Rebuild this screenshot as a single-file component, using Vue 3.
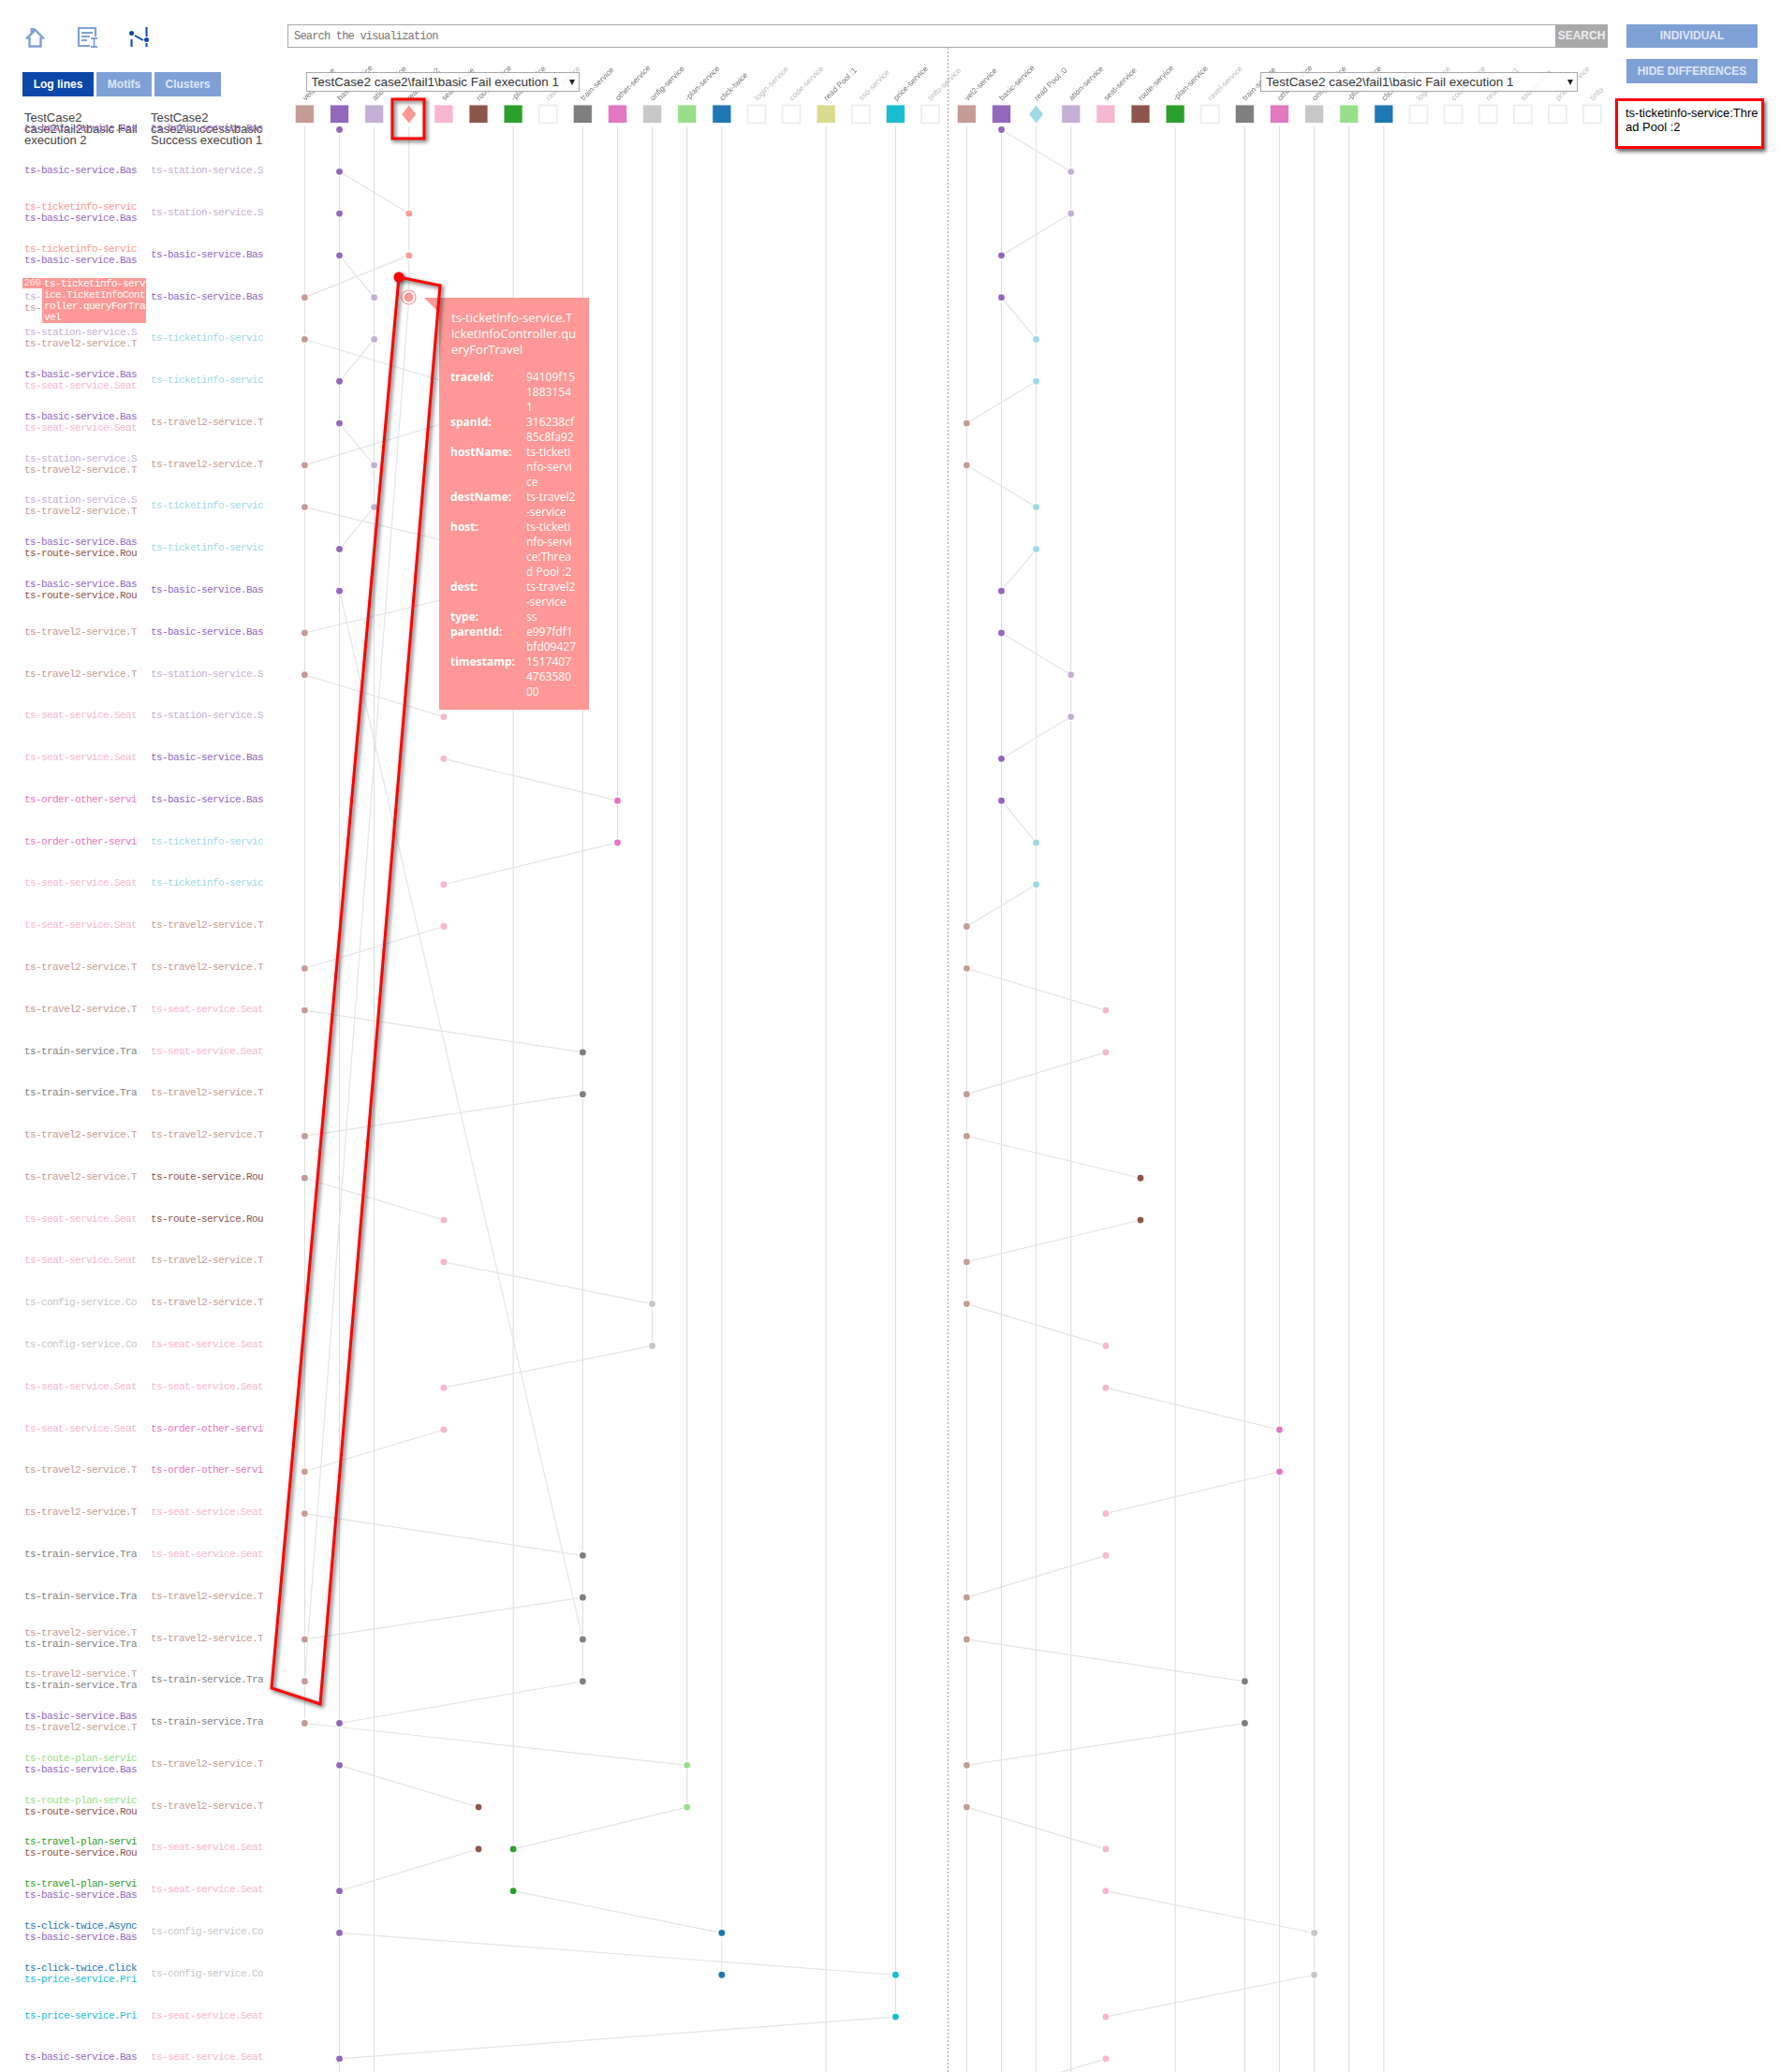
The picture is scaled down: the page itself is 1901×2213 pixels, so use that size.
<template>
	<div class="page">
		<aside class="side">
			<div class="icons">
				<svg class="icon" width="24" height="24" viewBox="0 0 24 24">
					<path d="M7 10V2.500h3.500v4" fill="#7fa0d6" stroke="#7fa0d6" />
					<path d="M2 13.500 11.500 4 21 13.500" fill="none" stroke="#7fa0d6" stroke-width="2.400" />
					<path d="M5.500 11.500V21.500h12v-10" fill="none" stroke="#7fa0d6" stroke-width="2.400" />
				</svg>
				<svg class="icon" width="24" height="24" viewBox="0 0 24 24">
					<path d="M14 21H2V2h18v9" fill="none" stroke="#7fa0d6" stroke-width="2.200" />
					<path d="M5 7h12M5 11h9M5 15h6" stroke="#7fa0d6" stroke-width="1.800" />
					<path d="M15 13h7M15 22h7M18.500 13v9" fill="none" stroke="#7fa0d6" stroke-width="1.800" />
				</svg>
				<svg class="icon" width="24" height="24" viewBox="0 0 24 24">
					<circle cx="3.500" cy="7.500" r="2.500" fill="#0a47a9" />
					<circle cx="19.500" cy="14.500" r="2.500" fill="#0a47a9" />
					<path d="M3.500 14v8M19.500 1v10M19.500 18v4" stroke="#0a47a9" stroke-width="2" />
					<path d="M7 10l9 5" stroke="#0a47a9" stroke-width="2" />
				</svg>
			</div>

			<div class="tabs">
				<div class="tab tab-active">Log lines</div>
				<div class="tab tab-motifs">Motifs</div>
				<div class="tab tab-clusters">Clusters</div>
			</div>

			<div class="log-head">
				<div>TestCase2<br />case2\fail2\basic Fail<br />execution 2</div>
				<div>TestCase2<br />case2\success\basic<br />Success execution 1</div>
			</div>

			<div class="log-rows">
				<div v-for="(row, index) in logRows" :key="index" class="log-row">
					<div class="log-cell">
						<div
							v-for="(name, i) in row.left"
							:key="i"
							class="log-line"
							:style="{ color: services[name].color }"
						>
							{{ services[name].text }}
						</div>
						<template v-if="index === 4">
							<div class="hover-num">269</div>
							<div class="hover-text">ts-ticketinfo-service.TicketInfoController.queryForTravel</div>
						</template>
					</div>
					<div class="log-cell">
						<div class="log-line" :style="{ color: services[row.right].color }">
							{{ services[row.right].text }}
						</div>
					</div>
				</div>
			</div>
		</aside>

		<main class="main">
			<div class="search">
				<input class="search-input" type="text" placeholder="Search the visualization" />
				<div class="search-button">SEARCH</div>
			</div>

			<div class="chart">
				<svg class="chart-svg" width="1412" height="2162" viewBox="300 51 1412 2162">
					<line x1="1012.600" y1="51" x2="1012.600" y2="2213" stroke="#b5b5b5" stroke-width="1.500" stroke-dasharray="2 2" />

					<g v-for="lane in lanes" :key="lane.name">
						<line
							v-for="col in lane.verticals"
							:key="col.index"
							:x1="lane.x(col.index)"
							y1="135"
							:x2="lane.x(col.index)"
							:y2="col.end"
							stroke="#dcdcdc"
							stroke-width="1"
						/>
						<line
							v-for="(link, i) in lane.links"
							:key="i"
							:x1="lane.x(link[1])"
							:y1="rowY(link[0])"
							:x2="lane.x(link[3])"
							:y2="rowY(link[2])"
							stroke="#e4e4e4"
							stroke-width="1.200"
						/>

						<g v-for="(item, i) in lane.columns" :key="i">
							<text
								class="col-label"
								:class="{ 'col-label-off': !item.color }"
								:x="lane.x(i) + 1"
								y="108"
								:transform="`rotate(-45 ${lane.x(i) + 1} 108)`"
							>
								{{ item.label }}
							</text>
							<polygon
								v-if="item.diamond"
								:points="diamondPoints(lane.x(i))"
								:fill="item.color"
							/>
							<rect
								v-else-if="item.color"
								:x="lane.x(i) - 9.5"
								y="112.500"
								width="19"
								height="18.500"
								:fill="item.color"
								:stroke="item.color"
								stroke-opacity="0.200"
								stroke-width="1.500"
							/>
							<rect
								v-else
								:x="lane.x(i) - 9.5"
								y="112.500"
								width="19"
								height="19"
								fill="#fff"
								stroke="#eeeeee"
								stroke-width="2"
							/>
						</g>

						<circle
							v-for="(dot, i) in lane.dots"
							:key="i"
							class="dot"
							:cx="lane.x(dot[1])"
							:cy="rowY(dot[0])"
							r="3.400"
							:fill="lane.columns[dot[1]].color"
						/>
					</g>

					<circle cx="436.500" cy="317.500" r="7.500" fill="#fff" stroke="#ff9896" stroke-width="1.200" />
					<circle cx="436.500" cy="317.500" r="5" fill="#ff9896" />
				</svg>

				<div class="picker picker-left">
					<select class="picker-select">
						<option>TestCase2 case2\fail1\basic Fail execution 1</option>
					</select>
				</div>
				<div class="picker picker-right">
					<select class="picker-select">
						<option>TestCase2 case2\fail1\basic Fail execution 1</option>
					</select>
				</div>

				<div class="tip">
					<div class="tip-title">
						<div v-for="line in tipTitle" :key="line">{{ line }}</div>
					</div>
					<div v-for="entry in tipRows" :key="entry.label" class="tip-row">
						<div class="tip-label">{{ entry.label }}</div>
						<div>
							<div v-for="line in entry.lines" :key="line">{{ line }}</div>
						</div>
					</div>
				</div>

				<svg class="marks" width="1412" height="2162" viewBox="300 51 1412 2162">
					<rect x="419" y="106" width="34" height="42" fill="none" stroke="#f00" stroke-width="3" />
					<polygon points="426,296 470,305 342,1820 290,1803" fill="none" stroke="#f00" stroke-width="3" />
					<circle cx="426" cy="296" r="5.500" fill="#f00" />
				</svg>
			</div>
		</main>

		<section class="controls">
			<div class="control-button">INDIVIDUAL</div>
			<div class="control-button control-second">HIDE DIFFERENCES</div>
			<div class="selected-box">ts-ticketinfo-service:Thread Pool :2</div>
		</section>
	</div>
</template>

<script setup>
const services = {
	basic: { text: "ts-basic-service.BasicController", color: "#9467bd" },
	station: { text: "ts-station-service.StationController", color: "#c5b0d5" },
	ticket: { text: "ts-ticketinfo-service.TicketInfoController", color: "#ff9896" },
	ticketB: { text: "ts-ticketinfo-service.TicketInfoController", color: "#9edae5" },
	travel2: { text: "ts-travel2-service.Travel2Controller", color: "#c49c94" },
	seat: { text: "ts-seat-service.SeatController", color: "#f7b6d2" },
	route: { text: "ts-route-service.RouteController", color: "#8c564b" },
	order: { text: "ts-order-other-service.OrderOtherController", color: "#e377c2" },
	train: { text: "ts-train-service.TrainController", color: "#7f7f7f" },
	config: { text: "ts-config-service.ConfigController", color: "#c7c7c7" },
	routePlan: { text: "ts-route-plan-service.RoutePlanController", color: "#98df8a" },
	travelPlan: { text: "ts-travel-plan-service.TravelPlanController", color: "#2ca02c" },
	clickAsync: { text: "ts-click-twice.AsyncTask", color: "#1f77b4" },
	clickCtrl: { text: "ts-click-twice.ClickController", color: "#1f77b4" },
	price: { text: "ts-price-service.PriceController", color: "#17becf" },
};

const leftNames = [
	["basic"], ["basic"], ["ticket", "basic"], ["ticket", "basic"], ["ticket", "station", "travel2"],
	["station", "travel2"], ["basic", "seat"], ["basic", "seat"], ["station", "travel2"], ["station", "travel2"],
	["basic", "route"], ["basic", "route"], ["travel2"], ["travel2"], ["seat"], ["seat"], ["order"], ["order"],
	["seat"], ["seat"], ["travel2"], ["travel2"], ["train"], ["train"], ["travel2"], ["travel2"], ["seat"], ["seat"],
	["config"], ["config"], ["seat"], ["seat"], ["travel2"], ["travel2"], ["train"], ["train"],
	["travel2", "train"], ["travel2", "train"], ["basic", "travel2"], ["routePlan", "basic"], ["routePlan", "route"],
	["travelPlan", "route"], ["travelPlan", "basic"], ["clickAsync", "basic"], ["clickCtrl", "price"], ["price"], ["basic"],
];

const rightNames = [
	"basic", "station", "station", "basic", "basic", "ticketB", "ticketB", "travel2", "travel2", "ticketB", "ticketB",
	"basic", "basic", "station", "station", "basic", "basic", "ticketB", "ticketB", "travel2", "travel2", "seat", "seat",
	"travel2", "travel2", "route", "route", "travel2", "travel2", "seat", "seat", "order", "order", "seat", "seat",
	"travel2", "travel2", "train", "train", "travel2", "travel2", "seat", "seat", "config", "config", "seat", "seat",
];

const logRows = leftNames.map((left, i) => ({ left, right: rightNames[i] }));

const rowY = (row) => 138.5 + 44.79 * row;
const bottom = 2213;

const columnsA = [
	{ label: "vel2-service", color: "#c49c94" },
	{ label: "basic-service", color: "#9467bd" },
	{ label: "ation-service", color: "#c5b0d5" },
	{ label: "read Pool :2", color: "#ff9896", diamond: true },
	{ label: "seat-service", color: "#f7b6d2" },
	{ label: "route-service", color: "#8c564b" },
	{ label: "-plan-service", color: "#2ca02c" },
	{ label: "ravel-service" },
	{ label: "train-service", color: "#7f7f7f" },
	{ label: "other-service", color: "#e377c2" },
	{ label: "onfig-service", color: "#c7c7c7" },
	{ label: "-plan-service", color: "#98df8a" },
	{ label: "click-twice", color: "#1f77b4" },
	{ label: "login-service" },
	{ label: "code-service" },
	{ label: "read Pool :1", color: "#dbdb8d" },
	{ label: "sso-service" },
	{ label: "price-service", color: "#17becf" },
	{ label: "tinfo-service" },
];

const columnsB = columnsA.map((col, i) => {
	if (i === 2) return { label: "read Pool :0", color: "#9edae5", diamond: true };
	if (i === 3) return { label: "ation-service", color: "#c5b0d5" };
	if (i === 15) return { label: "read Pool :1" };
	if (i === 17) return { label: "price-service" };
	return col;
});

const leftDots = [
	[0, 1], [1, 1], [2, 1], [2, 3], [3, 1], [3, 3], [4, 0], [4, 2], [5, 0], [5, 2], [6, 1], [6, 4], [7, 1], [7, 4],
	[8, 0], [8, 2], [9, 0], [9, 2], [10, 1], [10, 5], [11, 1], [11, 5], [12, 0], [13, 0], [14, 4], [15, 4], [16, 9],
	[17, 9], [18, 4], [19, 4], [20, 0], [21, 0], [22, 8], [23, 8], [24, 0], [25, 0], [26, 4], [27, 4], [28, 10], [29, 10],
	[30, 4], [31, 4], [32, 0], [33, 0], [34, 8], [35, 8], [36, 0], [36, 8], [37, 0], [37, 8], [38, 0], [38, 1], [39, 1],
	[39, 11], [40, 5], [40, 11], [41, 5], [41, 6], [42, 1], [42, 6], [43, 1], [43, 12], [44, 12], [44, 17], [45, 17], [46, 1],
];

const leftLinks = [
	[0, 1, 1, 1], [1, 1, 2, 3], [3, 3, 4, 0], [3, 1, 4, 2], [5, 0, 6, 4], [5, 2, 6, 1], [7, 1, 8, 2], [7, 4, 8, 0],
	[9, 0, 10, 5], [9, 2, 10, 1], [11, 5, 12, 0], [11, 1, 36, 8], [13, 0, 14, 4], [15, 4, 16, 9], [17, 9, 18, 4],
	[19, 4, 20, 0], [21, 0, 22, 8], [23, 8, 24, 0], [25, 0, 26, 4], [27, 4, 28, 10], [29, 10, 30, 4], [31, 4, 32, 0],
	[33, 0, 34, 8], [35, 8, 36, 0], [4, 3, 37, 0], [38, 1, 37, 8], [38, 0, 39, 11], [39, 1, 40, 5], [40, 11, 41, 6],
	[41, 5, 42, 1], [42, 6, 43, 12], [43, 1, 44, 17], [45, 17, 46, 1],
];

const leftVerticals = [
	{ index: 0, end: rowY(38) },
	{ index: 1, end: bottom },
	{ index: 2, end: bottom },
	{ index: 3, end: rowY(4) },
	{ index: 6, end: rowY(42) },
	{ index: 8, end: rowY(37) },
	{ index: 9, end: rowY(17) },
	{ index: 10, end: rowY(29) },
	{ index: 11, end: rowY(40) },
	{ index: 12, end: rowY(44) },
	{ index: 15, end: bottom },
	{ index: 17, end: rowY(45) },
];

const rightSeq = [
	1, 3, 3, 1, 1, 2, 2, 0, 0, 2, 2, 1, 1, 3, 3, 1, 1, 2, 2, 0, 0, 4, 4, 0, 0, 5, 5, 0, 0, 4, 4, 9, 9, 4, 4, 0, 0, 8,
	8, 0, 0, 4, 4, 10, 10, 4, 4, 0,
];

const rightDots = rightSeq.map((col, row) => [row, col]);
const rightLinks = [];
for (let row = 0; row < rightSeq.length - 1; row += 2) {
	rightLinks.push([row, rightSeq[row], row + 1, rightSeq[row + 1]]);
}

const rightVerticals = [0, 1, 2, 3, 6, 8, 9, 10, 11, 12].map((index) => ({ index, end: bottom }));

const lanes = [
	{
		name: "fail",
		x: (col) => 325.4 + 37.12 * col,
		columns: columnsA,
		dots: leftDots,
		links: leftLinks,
		verticals: leftVerticals,
	},
	{
		name: "success",
		x: (col) => 1032.4 + 37.12 * col,
		columns: columnsB,
		dots: rightDots,
		links: rightLinks,
		verticals: rightVerticals,
	},
];

const diamondPoints = (x) => `${x},112.500 ${x + 7.5},122 ${x},131.500 ${x - 7.5},122`;

const tipTitle = ["ts-ticketinfo-service.T", "icketInfoController.qu", "eryForTravel"];

const tipRows = [
	{ label: "traceId:", lines: ["94109f15", "1883154", "1"] },
	{ label: "spanId:", lines: ["316238cf", "85c8fa92"] },
	{ label: "hostName:", lines: ["ts-ticketi", "nfo-servi", "ce"] },
	{ label: "destName:", lines: ["ts-travel2", "-service"] },
	{ label: "host:", lines: ["ts-ticketi", "nfo-servi", "ce:Threa", "d Pool :2"] },
	{ label: "dest:", lines: ["ts-travel2", "-service"] },
	{ label: "type:", lines: ["ss"] },
	{ label: "parentId:", lines: ["e997fdf1", "bfd09427"] },
	{ label: "timestamp:", lines: ["1517407", "4763580", "00"] },
];
</script>

<style>
html,
body {
	margin: 0;
	background: #fff;
}
</style>

<style scoped>
.page {
	display: grid;
	grid-template-columns: 300px 1412px 189px;
	width: 1901px;
	height: 2213px;
	overflow: hidden;
	font-family: "Liberation Sans", Arial, sans-serif;
	color: #333;
	background: #fff;
}

.side {
	padding-top: 28px;
}

.icons {
	display: flex;
	gap: 31.5px;
	height: 24px;
	padding-left: 26px;
}

.icon {
	display: block;
}

.tabs {
	display: flex;
	gap: 3px;
	margin: 25px 0 0 24px;
}

.tab {
	height: 26px;
	line-height: 26px;
	font-size: 12px;
	font-weight: 700;
	text-align: center;
	color: #dfe7f5;
	background: #7fa0d6;
}

.tab-active {
	width: 76px;
	color: #fff;
	background: #0a47a9;
}

.tab-motifs {
	width: 59px;
}

.tab-clusters {
	width: 71px;
}

.log-head {
	display: grid;
	grid-template-columns: 120px 120px;
	column-gap: 15px;
	height: 36px;
	margin: 17px 0 -41px 26px;
	font-size: 13px;
	line-height: 12px;
	white-space: nowrap;
	color: #444;
}

.log-rows {
	padding-left: 26px;
}

.log-row {
	display: grid;
	grid-template-columns: 120px 120px;
	column-gap: 15px;
	height: 44.79px;
}

.log-cell {
	position: relative;
	display: flex;
	flex-direction: column;
	justify-content: center;
}

.log-line {
	overflow: hidden;
	white-space: nowrap;
	font-family: "Liberation Mono", monospace;
	font-size: 11px;
	letter-spacing: -0.6px;
	line-height: 12px;
}

.hover-num {
	position: absolute;
	top: 2.800px;
	left: -2px;
	width: 21px;
	height: 11px;
	font-family: "Liberation Mono", monospace;
	font-size: 11px;
	letter-spacing: -0.6px;
	line-height: 11px;
	text-align: center;
	color: #ffe3e2;
	background: #ff9896;
}

.hover-text {
	position: absolute;
	top: 2.800px;
	left: 19px;
	width: 109px;
	padding-left: 2px;
	font-family: "Liberation Mono", monospace;
	font-size: 11px;
	letter-spacing: -0.6px;
	line-height: 12px;
	word-break: break-all;
	color: #fff;
	background: #ff9896;
}

.main {
	min-width: 0;
}

.search {
	display: flex;
	height: 25px;
	margin: 26px -5px 0 7px;
	box-sizing: border-box;
}

.search-input {
	flex: 1;
	min-width: 0;
	box-sizing: border-box;
	height: 25px;
	padding: 0 6px;
	border: 1px solid #a9a9a9;
	border-right: 0;
	border-radius: 0;
	outline: none;
	font-family: "Liberation Mono", monospace;
	font-size: 12px;
	letter-spacing: -0.8px;
}

.search-input::placeholder {
	color: #757575;
	opacity: 1;
}

.search-button {
	width: 56px;
	line-height: 25px;
	font-size: 12px;
	font-weight: 700;
	text-align: center;
	color: #eee;
	background: #a9a9a9;
}

.chart {
	position: relative;
	width: 1412px;
	height: 2162px;
}

.chart-svg,
.marks {
	display: block;
}

.marks {
	position: absolute;
	top: 0;
	left: 0;
	overflow: visible;
	pointer-events: none;
	filter: drop-shadow(2px 2px 2px rgba(0, 0, 0, 0.65));
}

.dot {
	stroke: #fff;
	stroke-width: 2.500px;
	paint-order: stroke;
}

.col-label {
	font-family: "Liberation Sans", Arial, sans-serif;
	font-size: 8.500px;
	fill: #555;
	opacity: 0.8;
}

.col-label-off {
	fill: #aaa;
}

.picker {
	position: absolute;
	top: 26px;
	height: 21px;
}

.picker::after {
	content: "";
	position: absolute;
	top: 8px;
	right: 5px;
	border-style: solid;
	border-width: 6px 3.500px 0;
	border-color: #222 transparent transparent;
}

.picker-left {
	left: 26.500px;
	width: 292px;
}

.picker-right {
	left: 1046px;
	width: 339px;
}

.picker-select {
	display: block;
	box-sizing: border-box;
	width: 100%;
	height: 21px;
	padding: 0 0 0 5px;
	border: 1px solid #a9a9a9;
	border-radius: 0;
	outline: none;
	appearance: none;
	font-family: "Liberation Sans", Arial, sans-serif;
	font-size: 13.450px;
	color: #333;
	background: rgba(255, 255, 255, 0.85);
}

.tip {
	position: absolute;
	top: 267px;
	left: 169px;
	box-sizing: border-box;
	width: 160px;
	height: 440px;
	padding: 13px 0 0 12px;
	font-family: "Open Sans", sans-serif;
	font-size: 12px;
	line-height: 16px;
	color: #fff;
	background: #ff9896;
}

.tip::before {
	content: "";
	position: absolute;
	top: 0;
	left: -16px;
	border-top: 16px solid #ff9896;
	border-left: 16px solid transparent;
}

.tip-title {
	margin-bottom: 12.500px;
	padding-left: 1px;
	font-size: 13.100px;
	line-height: 17px;
}

.tip-row {
	display: grid;
	grid-template-columns: 81px 1fr;
}

.tip-label {
	font-weight: 700;
}

.controls {
	padding: 26px 0 0 25px;
}

.control-button {
	width: 140px;
	height: 25px;
	line-height: 25px;
	font-size: 12px;
	font-weight: 700;
	text-align: center;
	color: #dfe7f5;
	background: #7fa0d6;
}

.control-second {
	height: 26px;
	margin-top: 12px;
	line-height: 26px;
}

.selected-box {
	box-sizing: border-box;
	width: 159px;
	height: 54px;
	margin: 16px 0 0 -12px;
	padding: 5px 2px 0 8px;
	border: 3px solid #f00;
	box-shadow: 2px 3px 4px rgba(0, 0, 0, 0.6);
	font-size: 13px;
	line-height: 15px;
	word-break: break-all;
	color: #000;
	background: #fff;
}
</style>
